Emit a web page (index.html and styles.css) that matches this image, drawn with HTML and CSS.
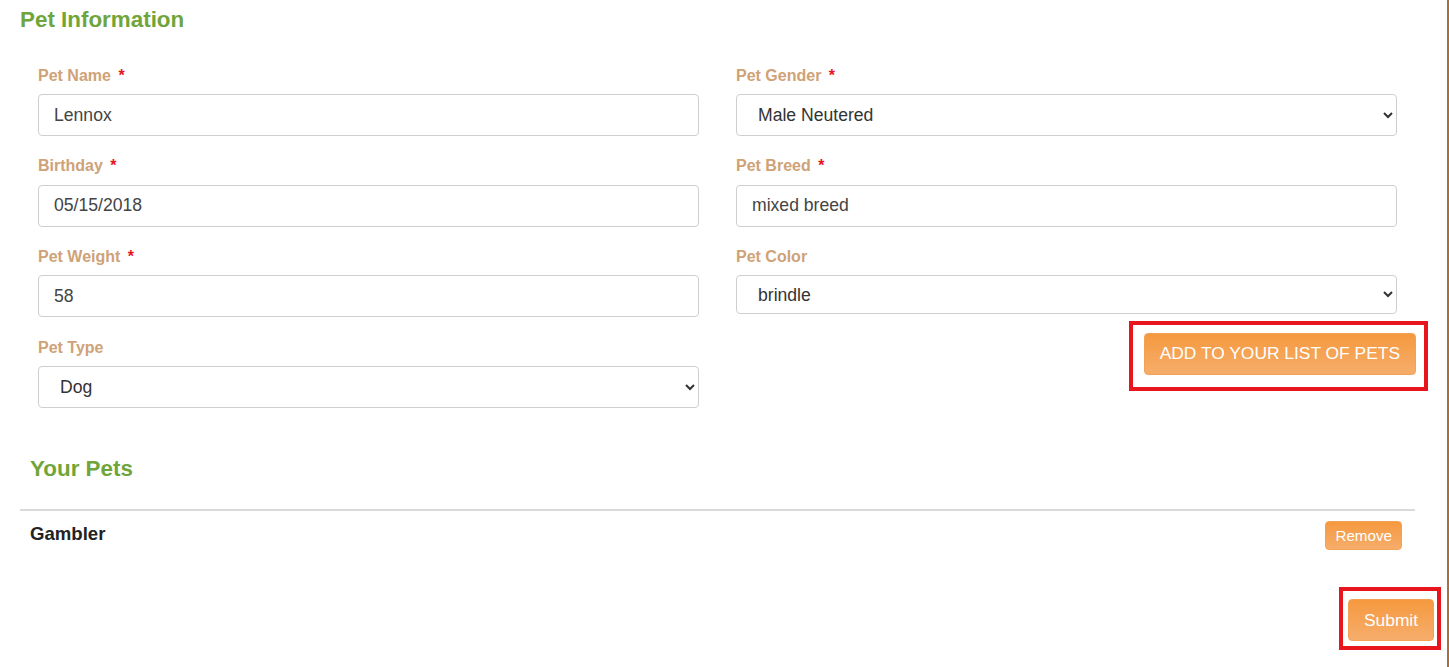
FILE: index.html
```html
<!DOCTYPE html>
<html lang="en">
<head>
<meta charset="utf-8">
<title>Pet Information</title>
<link rel="stylesheet" href="styles.css">
</head>
<body>
<div class="page">
  <h2 class="section-title">Pet Information</h2>
  <form class="pet-form">
    <div class="col">
      <div class="field">
        <label class="field-label">Pet Name <span class="req">*</span></label>
        <input class="control" type="text" value="Lennox">
      </div>
      <div class="field">
        <label class="field-label">Birthday <span class="req">*</span></label>
        <input class="control" type="text" value="05/15/2018">
      </div>
      <div class="field">
        <label class="field-label">Pet Weight <span class="req">*</span></label>
        <input class="control" type="text" value="58">
      </div>
      <div class="field">
        <label class="field-label">Pet Type</label>
        <select class="control control-select"><option>Dog</option></select>
      </div>
    </div>
    <div class="col col-right">
      <div class="field">
        <label class="field-label">Pet Gender <span class="req">*</span></label>
        <select class="control control-select"><option>Male Neutered</option></select>
      </div>
      <div class="field">
        <label class="field-label">Pet Breed <span class="req">*</span></label>
        <input class="control" type="text" value="mixed breed">
      </div>
      <div class="field field-compact">
        <label class="field-label">Pet Color</label>
        <select class="control control-select control-short"><option>brindle</option></select>
      </div>
      <div class="actions">
        <div class="highlight highlight-add">
          <button type="button" class="btn btn-lg">ADD TO YOUR LIST OF PETS</button>
        </div>
      </div>
    </div>
  </form>

  <h2 class="section-title section-title-pets">Your Pets</h2>
  <div class="divider"></div>
  <div class="pet-row">
    <span class="pet-name">Gambler</span>
    <button type="button" class="btn btn-sm">Remove</button>
  </div>
  <div class="submit-row">
    <div class="highlight highlight-submit">
      <button type="button" class="btn btn-lg btn-submit">Submit</button>
    </div>
  </div>
</div>
</body>
</html>
```

FILE: styles.css
```css
* { box-sizing: border-box; }

html, body {
  margin: 0;
  padding: 0;
  background: #fff;
}

body {
  font-family: "Liberation Sans", Arial, sans-serif;
  color: #333;
}

.page {
  width: 1449px;
  min-height: 667px;
  border-right: 2px solid #a3713e;
  padding: 0 31px 0 20px;
  overflow: hidden;
}

.section-title {
  margin: 7px 0 0 0;
  font-size: 22.4px;
  line-height: 26px;
  font-weight: bold;
  color: #6fa53b;
}

.section-title-pets {
  margin-top: 30px;
  padding-left: 10px;
}

.pet-form {
  display: grid;
  grid-template-columns: 661px 1fr;
  column-gap: 37px;
  padding: 30.5px 0 0 18px;
  align-items: start;
}

.col-right .field {
  margin-right: 19px;
}

.field {
  display: flex;
  flex-direction: column;
  margin-bottom: 18.2px;
}

.field-compact {
  margin-bottom: 6.6px;
}

.field-label {
  font-size: 16px;
  line-height: 24px;
  font-weight: bold;
  color: #cfa277;
  margin-bottom: 6.5px;
}

.req {
  color: #e8161c;
  margin-left: 3px;
}

.control {
  width: 100%;
  height: 42px;
  border: 1px solid #cfcfcf;
  border-radius: 4px;
  padding: 0 15px;
  font-family: "Liberation Sans", Arial, sans-serif;
  font-size: 17.6px;
  color: #444;
  background: #fff;
  outline: none;
}

.control-select {
  padding: 0 8px 0 17px;
  color: #333;
}

.control-short {
  height: 39px;
}

.actions {
  display: flex;
  justify-content: flex-end;
  margin-right: -12px;
}

.highlight {
  border: 4px solid #e8161c;
  display: inline-flex;
}

.highlight-add {
  padding: 8px 8px 12px 11px;
}

.btn {
  font-family: "Liberation Sans", Arial, sans-serif;
  color: #fff;
  border: 1px solid #f3a154;
  border-radius: 4px;
  background: linear-gradient(to bottom, #f5993f, #f6ad6b);
  cursor: pointer;
}

.btn-lg {
  height: 42px;
  font-size: 17.4px;
  padding: 0 15px;
}

.btn-sm {
  height: 29px;
  font-size: 15.2px;
  padding: 0 9px;
  margin-right: 14px;
}

.divider {
  margin-top: 27px;
  height: 2px;
  background: #dadada;
  width: 1395px;
}

.pet-row {
  display: flex;
  justify-content: space-between;
  align-items: flex-start;
  padding: 10px 0 0 10px;
}

.pet-name {
  font-size: 18.6px;
  line-height: 24px;
  font-weight: bold;
  color: #222;
  padding-top: 0.6px;
}

.submit-row {
  display: flex;
  justify-content: flex-end;
  margin-top: 37px;
  margin-right: -25px;
}

.highlight-submit {
  padding: 8px 3px 5px 5px;
}

.btn-submit {
  width: 86px;
  padding: 0;
}
```
